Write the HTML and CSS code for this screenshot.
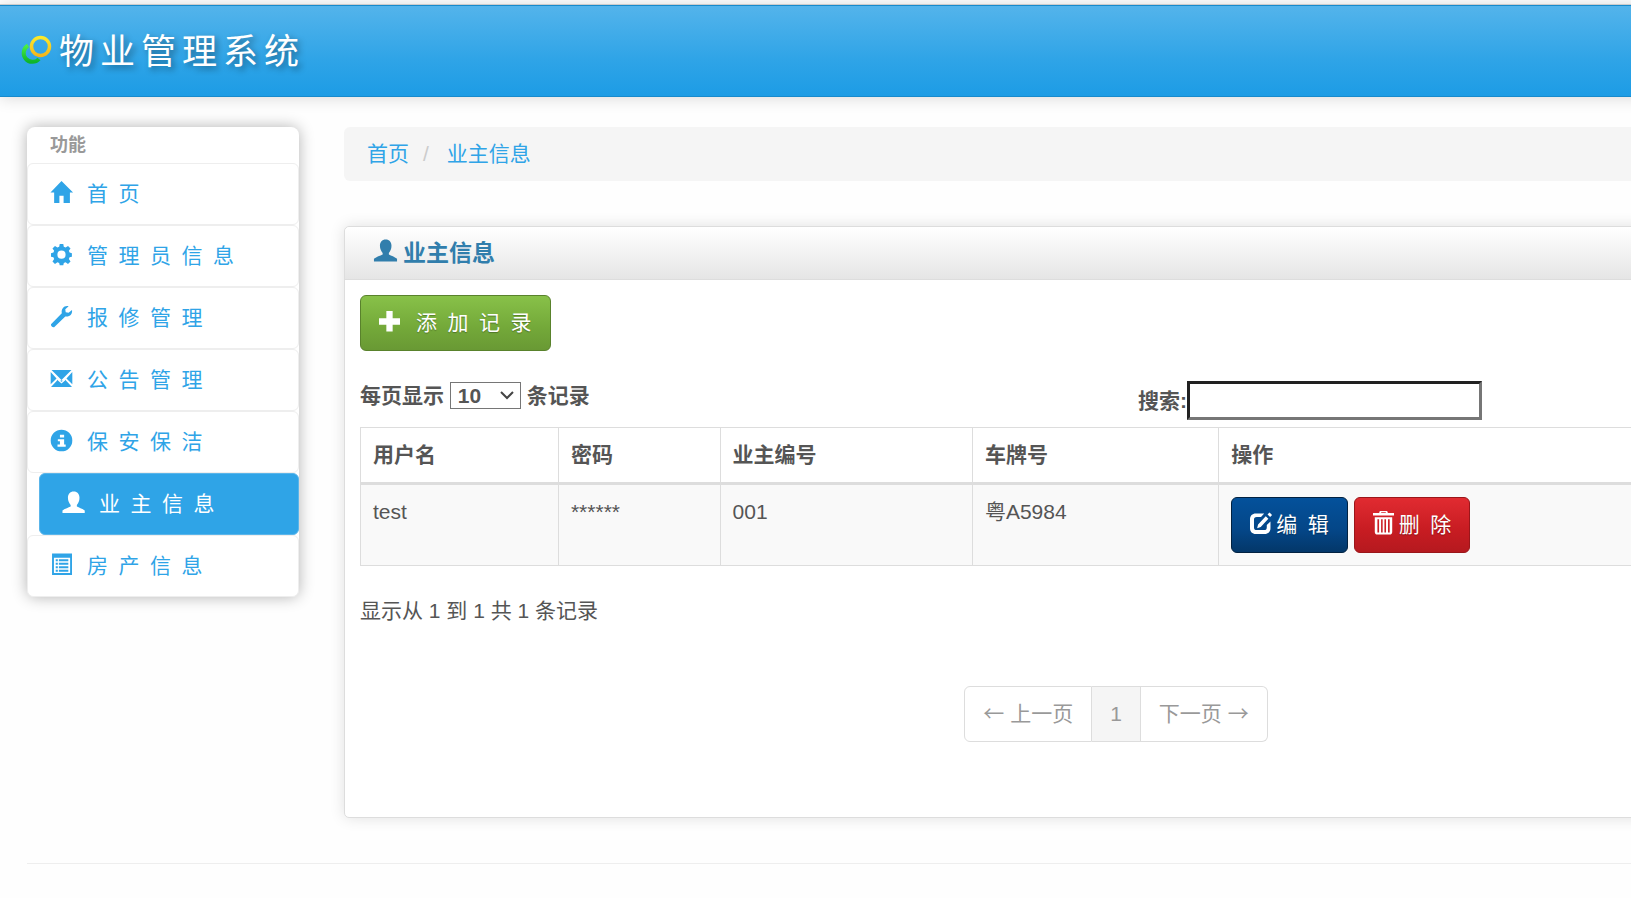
FILE: index.html
```
<!DOCTYPE html>
<html lang="zh-CN">
<head>
<meta charset="utf-8">
<title>物业管理系统</title>
<link rel="stylesheet" href="styles.css">
</head>
<body>
<div class="page">
  <header class="navbar">
    <a class="brand" href="#">
      <svg class="logo" viewBox="0 0 32 32" aria-hidden="true">
        <defs>
          <linearGradient id="gold" x1="0" y1="0" x2="0" y2="1"><stop offset="0" stop-color="#fbe92a"/><stop offset="1" stop-color="#f5b61c"/></linearGradient>
          <linearGradient id="leaf" x1="0" y1="0" x2="0" y2="1"><stop offset="0" stop-color="#4af043"/><stop offset="1" stop-color="#0fb52c"/></linearGradient>
        </defs>
        <path d="M8 11.500a8.800 8.800 0 1 0 11 13.500" fill="none" stroke="url(#leaf)" stroke-width="4"/>
        <circle cx="20.500" cy="12.500" r="9" fill="none" stroke="url(#gold)" stroke-width="3.500"/>
      </svg>
      <span class="brand-name">物业管理系统</span>
    </a>
  </header>

  <div class="layout">
    <nav class="sidebar" aria-label="功能">
      <div class="sidebar-title">功能</div>
      <ul class="menu">
        <li><a href="#"><svg class="icon" viewBox="0 0 20 20"><path d="M10 -1L21 10H18V20H12V13H8V20H3V10H-.5z"/></svg><span>首&ensp;页</span></a></li>
        <li><a href="#"><svg class="icon" viewBox="0 0 20 20"><path fill-rule="evenodd" d="M8.300 0h3.400l.5 2.700 1.700.7 2.300-1.600 2.400 2.400-1.600 2.300.7 1.700 2.200.5v3.400l-2.200.5-.7 1.700 1.600 2.300-2.400 2.400-2.300-1.600-1.700.7-.5 2.200H8.300l-.5-2.200-1.700-.7-2.300 1.600-2.400-2.400L3 14.300l-.7-1.700L0 12.100V8.700l2.300-.5L3 6.500 1.400 4.200l2.400-2.400 2.300 1.600 1.700-.7zM10 6.300a3.900 3.900 0 1 0 0 7.800 3.900 3.900 0 0 0 0-7.800z"/></svg><span>管&ensp;理&ensp;员&ensp;信&ensp;息</span></a></li>
        <li><a href="#"><svg class="icon" viewBox="0 0 20 20"><path d="M16.800.2l-3.200 3 .4 2.700 2.700.5 3.300-2.700c.7 3.700-2.400 7.100-6.400 6.200L3 20.200c-1.500.5-3.500-1.300-3-2.800L10.300 7C9.500 2.700 12.500-.8 16.800.2z"/></svg><span>报&ensp;修&ensp;管&ensp;理</span></a></li>
        <li><a href="#"><svg class="icon" viewBox="0 0 20 20"><path d="M.5 2h19L10 11.500zM-.3 3.800L5.300 10-.3 15.500zM20.300 3.800V15.500L14.700 10z"/><path d="M6.500 11.200L8 12.700l2-1 2 1 1.500-1.500 6.500 6.800H0z"/><path d="M7 11.500l3 2.500 3-2.500" fill="none" stroke="#fff" stroke-width="1.300"/></svg><span>公&ensp;告&ensp;管&ensp;理</span></a></li>
        <li><a href="#"><svg class="icon" viewBox="0 0 20 20"><path fill-rule="evenodd" d="M10-.3a10.300 10.300 0 1 0 0 20.600 10.300 10.300 0 0 0 0-20.600zM8.500 4.500h4v2.700h-4zM6.500 8.700h6v5.200h1.500v2H6.200v-2h2.300v-3.300h-2z"/></svg><span>保&ensp;安&ensp;保&ensp;洁</span></a></li>
        <li class="active"><a href="#"><svg class="icon" viewBox="0 0 20 20"><path d="M10.200-.5c3.500 0 5.500 2.400 5.500 6 0 3-1 5.200-2.500 6.800v1.500c2.300 1.200 5.300 2.200 7.500 3.700v2.500H-.5v-2.500c2.200-1.500 5.300-2.500 7.800-3.700v-1.500C5.800 10.700 4.700 8.500 4.700 5.500c0-3.600 2-6 5.500-6z"/></svg><span>业&ensp;主&ensp;信&ensp;息</span></a></li>
        <li><a href="#"><svg class="icon" viewBox="0 0 20 20"><path fill-rule="evenodd" d="M1-.5h19v20.500h-19zM2.800 3.500v14.700h15.400V3.500z"/><path d="M4.500 5h2v2H4.500zM7.500 5h9v2H7.500zM4.500 8.300h2v2H4.500zM7.500 8.300h9v2H7.500zM4.500 11.600h2v2H4.500zM7.500 11.600h9v2H7.500zM4.500 14.900h2v2H4.500zM7.500 14.900h9v2H7.500z"/></svg><span>房&ensp;产&ensp;信&ensp;息</span></a></li>
      </ul>
    </nav>

    <main class="content">
      <ol class="breadcrumb">
        <li><a href="#">首页</a></li>
        <li><a href="#">业主信息</a></li>
      </ol>

      <section class="panel">
        <h2 class="panel-title">
          <svg class="icon" viewBox="0 0 20 20"><path d="M10.200-.5c3.500 0 5.500 2.400 5.500 6 0 3-1 5.200-2.500 6.800v1.500c2.300 1.200 5.300 2.200 7.800 4v2.700H-1v-2.700c2.500-1.800 5.800-2.800 8.300-4v-1.500C5.800 10.700 4.700 8.500 4.700 5.500c0-3.600 2-6 5.500-6z"/></svg>
          <span>业主信息</span>
        </h2>
        <div class="panel-body">
          <button class="btn btn-add" type="button"><svg class="icon" viewBox="0 0 20 20"><path d="M7 0h6v7h7v6h-7v6.500H7V13H0V7h7z"/></svg><span>添&ensp;加&ensp;记&ensp;录</span></button>

          <div class="filters">
            <label class="length">每页显示
              <select><option>10</option><option>25</option><option>50</option><option>100</option></select>
              条记录</label>
            <label class="search">搜索:<input type="text"></label>
          </div>

          <table class="records">
            <colgroup><col class="c-user"><col class="c-pass"><col class="c-id"><col class="c-plate"><col></colgroup>
            <thead>
              <tr><th>用户名</th><th>密码</th><th>业主编号</th><th>车牌号</th><th>操作</th></tr>
            </thead>
            <tbody>
              <tr>
                <td>test</td><td>******</td><td>001</td><td>粤A5984</td>
                <td>
                  <div class="actions">
                    <button class="btn btn-edit" type="button"><svg class="icon" viewBox="0 0 20 20"><path d="M13.500.5L10.500 3.800H6.500C4.500 3.800 3.800 4.600 3.800 6.500v7c0 2 .7 2.700 2.700 2.700h6.800c2 0 2.700-.7 2.700-2.700v-2L19.500 8v6.500c0 3.300-2.200 5.500-5.500 5.500H5.500C2.200 20 0 17.800 0 14.500v-8.500C0 2.700 2.200.5 5.500.5z"/><path d="M15 3l2.500 2.500-7.300 7.800-3.400 1.200.9-3.500zM18.500-.5l2.500 2.300-1.800 2L16.700 1.400z"/></svg><span>编&ensp;辑</span></button>
                    <button class="btn btn-delete" type="button"><svg class="icon" viewBox="0 0 20 20"><path fill-rule="evenodd" d="M6.500-2h7l.7 2H20v2.300H0V0h5.800zM8-.8L7.600 0h4.800L12-.8zM1.700 4h16.600v14c0 1.600-1 2.500-2.500 2.500H4.200c-1.500 0-2.500-.9-2.500-2.500zM4.200 6v12.500h1.600V6zM7.700 6v12.500h1.500V6zM10.900 6v12.500h1.500V6zM14.300 6v12.500h1.600V6z"/></svg><span>删&ensp;除</span></button>
                  </div>
                </td>
              </tr>
            </tbody>
          </table>

          <p class="info">显示从 1 到 1 共 1 条记录</p>

          <ul class="pagination">
            <li><a href="#"><span class="arrow">←</span> 上一页</a></li>
            <li class="current"><a href="#">1</a></li>
            <li><a href="#">下一页 <span class="arrow">→</span></a></li>
          </ul>
        </div>
      </section>
    </main>
  </div>

  <hr class="rule">
</div>
</body>
</html>
```

FILE: styles.css
```
* { box-sizing: border-box; }

body {
  margin: 0;
  overflow-x: hidden;
  background: #fefefe;
  color: #555;
  font: 21px/30px "Liberation Sans", "Noto Sans CJK SC", sans-serif;
}

a { color: #2fa4e7; text-decoration: none; }
ul, ol { margin: 0; padding: 0; list-style: none; }

.page { min-width: 1915px; padding-top: 4px; }

.icon {
  flex: none;
  width: 21px;
  height: 21px;
  margin-bottom: 3px;
  fill: currentColor;
  overflow: visible;
}

/* Header */
.navbar {
  display: flex;
  align-items: center;
  height: 93px;
  padding: 0 20px 4px;
  border-top: 1px solid #ccc;
  border-bottom: 1px solid #178acc;
  background: linear-gradient(#54b4eb, #2fa4e7 60%, #1d9ce5);
  box-shadow: inset 0 1px #178acc, 0 1px 15px rgba(0, 0, 0, .15);
}
.brand { display: flex; align-items: center; gap: 7px; color: #fff; }
.logo { width: 32px; height: 32px; margin-top: 3px; }
.brand-name {
  font-family: "Kaiti SC", KaiTi, "Noto Sans CJK SC", sans-serif;
  font-size: 35px;
  line-height: 48px;
  letter-spacing: 6px;
  text-shadow: 3px 3px 6px rgba(0, 0, 0, .4);
}

.layout {
  display: grid;
  grid-template-columns: 272px 1fr;
  align-items: start;
  gap: 45px;
  padding: 30px 27px 45px;
}

/* Sidebar */
.sidebar {
  border-radius: 8px;
  background: #fff;
  box-shadow: 0 0 15px rgba(0, 0, 0, .3);
}
.sidebar-title {
  height: 36px;
  padding: 0 23px;
  color: #999;
  font-weight: bold;
  font-size: 18px;
  line-height: 36px;
}
.menu a {
  display: flex;
  align-items: center;
  gap: 15px;
  height: 62px;
  padding: 0 23px;
  border: 1px solid #eee;
  border-radius: 6px;
}
.menu .active { margin-left: 12px; }
.menu .active a { border-color: #5ab5ea; background: #2fa4e7; color: #fff; }

/* Breadcrumb */
.breadcrumb {
  display: flex;
  margin-bottom: 45px;
  padding: 12px 23px;
  border-radius: 6px;
  background: #f5f5f5;
}
.breadcrumb li + li::before { content: "/"; padding: 0 18px 0 14px; color: #ccc; }

/* Panel */
.panel {
  border: 1px solid #ddd;
  border-radius: 5px;
  background: #fff;
  box-shadow: 0 0 15px rgba(0, 0, 0, .12);
}
.panel-title {
  display: flex;
  align-items: center;
  gap: 7px;
  height: 53px;
  margin: 0;
  padding: 0 30px;
  border-bottom: 1px solid #ddd;
  border-radius: 5px 5px 0 0;
  background: linear-gradient(#fff, #e5e5e5);
  color: #317eac;
  font-size: 23px;
}
.panel-title .icon { margin-bottom: 5px; }
.panel-body { padding: 15px 15px 75px; }

/* Buttons */
.btn {
  display: inline-flex;
  align-items: center;
  gap: 5px;
  padding: 12px 18px;
  border: 1px solid;
  border-radius: 6px;
  color: #fff;
  font: inherit;
  text-shadow: 0 1px 1px rgba(0, 0, 0, .3);
}
.btn-add { gap: 16px; border-color: #59822c; background: linear-gradient(#88c149, #73a839 60%, #699934); }
.btn-edit { border-color: #022241; background: linear-gradient(#04519b, #044687 60%, #033769); }
.btn-delete { border-color: #9a161a; background: linear-gradient(#e12b31, #c71c22 60%, #b5191f); }
.actions { display: flex; gap: 6px; }

/* Filters */
.filters {
  display: grid;
  grid-template-columns: 1fr 1fr;
  gap: 44px;
  padding: 30px 0 7px;
  font-weight: bold;
}
.length { align-self: start; }
.length select {
  appearance: none;
  width: 71px;
  height: 27px;
  padding: 0 7px;
  border: 1px solid #767676;
  border-radius: 0;
  background: #fff url("data:image/svg+xml,%3Csvg xmlns='http://www.w3.org/2000/svg' width='14' height='9'%3E%3Cpath d='M1 1l6 6 6-6' fill='none' stroke='%23444' stroke-width='2'/%3E%3C/svg%3E") no-repeat right 6px center;
  color: inherit;
  font: inherit;
  line-height: 25px;
}
.search { display: flex; align-items: center; }
.search input {
  width: 295px;
  height: 39px;
  padding: 0 3px;
  border: 3px solid;
  border-color: #212121 #767676 #767676 #212121;
  color: inherit;
  font: inherit;
}

/* Table */
.records {
  width: 100%;
  border-collapse: collapse;
  table-layout: fixed;
}
.c-user { width: 13.1%; }
.c-pass { width: 10.7%; }
.c-id { width: 16.7%; }
.c-plate { width: 16.3%; }
.records th, .records td {
  padding: 12px;
  border: 1px solid #ddd;
  text-align: left;
  vertical-align: top;
}
.records thead th { border-bottom-width: 3px; }
.records td { background: #f9f9f9; }

.info { margin: 30px 0 60px; }

/* Pagination */
.pagination { display: flex; justify-content: center; }
.pagination a {
  display: block;
  padding: 12px 18px;
  border: 1px solid #ddd;
  background: #fff;
  color: #999;
}
.arrow { font-family: "Noto Sans CJK SC", sans-serif; line-height: 1; }
.pagination li + li a { border-left: 0; }
.pagination li:first-child a { border-radius: 6px 0 0 6px; }
.pagination li:last-child a { border-radius: 0 6px 6px 0; }
.pagination .current a { background: #f5f5f5; }

.rule { height: 1px; margin: 0 27px; border: 0; background: #eee; }
```
